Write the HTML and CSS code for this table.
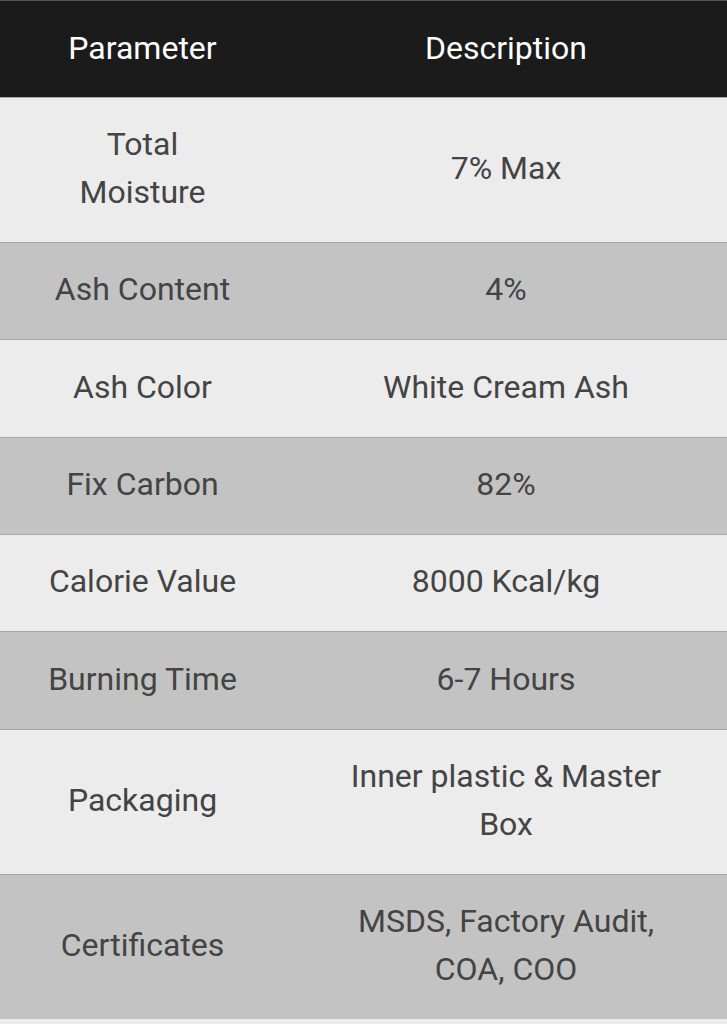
FILE: index.html
```html
<!DOCTYPE html>
<html lang="en">
<head>
<meta charset="utf-8">
<title>Specifications</title>
<link rel="stylesheet" href="styles.css">
</head>
<body>
<table class="spec">
  <colgroup><col class="col-param"><col class="col-desc"></colgroup>
  <thead>
    <tr><th>Parameter</th><th>Description</th></tr>
  </thead>
  <tbody>
    <tr><td class="p">Total Moisture</td><td class="d">7% Max</td></tr>
    <tr><td class="p">Ash Content</td><td class="d">4%</td></tr>
    <tr><td class="p">Ash Color</td><td class="d">White Cream Ash</td></tr>
    <tr><td class="p">Fix Carbon</td><td class="d">82%</td></tr>
    <tr><td class="p">Calorie Value</td><td class="d">8000 Kcal/kg</td></tr>
    <tr><td class="p">Burning Time</td><td class="d">6-7 Hours</td></tr>
    <tr><td class="p">Packaging</td><td class="d">Inner plastic &amp; Master Box</td></tr>
    <tr><td class="p">Certificates</td><td class="d">MSDS, Factory Audit, COA, COO</td></tr>
  </tbody>
</table>
</body>
</html>
```
FILE: styles.css
```css
html, body {
  margin: 0;
  padding: 0;
  background: #ececec;
}
body {
  font-family: Roboto, "Liberation Sans", sans-serif;
  font-size: 32px;
  line-height: 47.6px;
  color: #444444;
}
.spec {
  width: 727px;
  border-collapse: collapse;
  table-layout: fixed;
}
.col-param { width: 285px; }
.col-desc { width: 442px; }
.spec th {
  background: #1b1b1b;
  color: #ffffff;
  font-weight: 400;
  line-height: 48px;
  padding: 23px 20px 25px;
  text-align: center;
  border-top: 1px solid #555;
}
.spec td {
  text-align: center;
  padding: 23.4px 0 25.4px;
  border-top: 1px solid #a8a8a8;
}
.spec td.p { padding-left: 44px; padding-right: 44px; }
.spec td.d { padding-left: 40px; padding-right: 40px; }
.spec tbody tr:nth-child(odd) { background: #ececec; }
.spec tbody tr:nth-child(even) { background: #c3c3c3; }
```
